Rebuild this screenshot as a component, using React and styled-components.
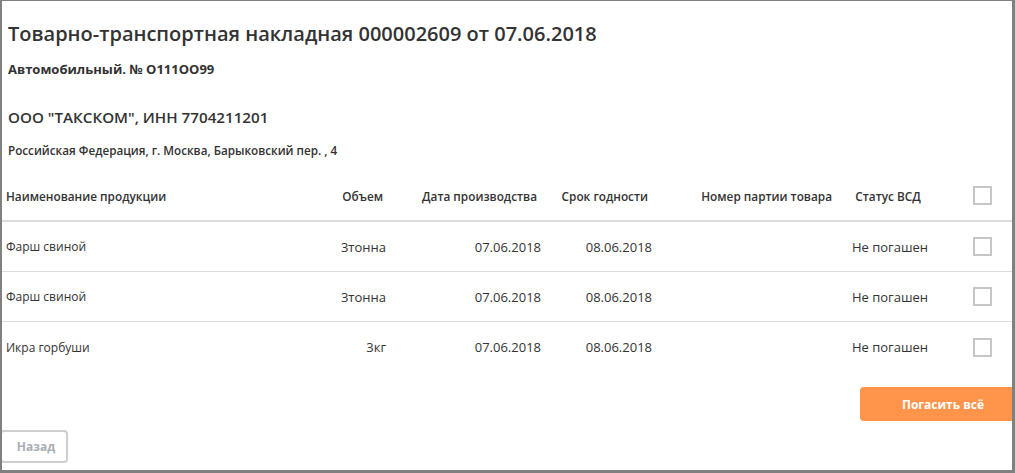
import React from "react";
import styled, { createGlobalStyle } from "styled-components";

const Global = createGlobalStyle`
  html, body { margin: 0; padding: 0; background: #fff; }
  body { font-family: "Open Sans", "Noto Sans", sans-serif; color: #333; }
  * { box-sizing: border-box; }
`;

const Frame = styled.div`
  width: 1015px;
  height: 473px;
  border-top: 1px solid #808080;
  border-left: 2px solid #808080;
  border-right: 3px solid #808080;
  border-bottom: 3px solid #808080;
  overflow: hidden;
  display: flex;
  flex-direction: column;
`;

const Header = styled.div`
  padding: 19px 0 0 6px;
  display: flex;
  flex-direction: column;
`;

const Title = styled.h1`
  margin: 0;
  font-size: 20px;
  font-weight: 600;
  line-height: 28px;
  color: #333;
`;

const Transport = styled.div`
  margin-top: 12px;
  font-size: 13px;
  font-weight: 700;
  line-height: 18px;
`;

const Company = styled.div`
  margin-top: 28px;
  font-size: 15.2px;
  font-weight: 600;
  line-height: 22px;
`;

const Address = styled.div`
  margin-top: 14px;
  font-size: 11.7px;
  font-weight: 600;
  line-height: 16px;
`;

const COLS = "298px 90px 155px 111px 184px 100px 1fr";

const Table = styled.div`
  margin-top: 13px;
  display: flex;
  flex-direction: column;
`;

const Row = styled.div`
  display: grid;
  grid-template-columns: ${COLS};
  align-items: center;
  height: ${(p) => (p.$head ? "51px" : "50px")};
  border-bottom: ${(p) =>
    p.$head ? "2px solid #dcdcdc" : p.$last ? "none" : "1px solid #dcdcdc"};
  font-size: ${(p) => (p.$head ? "11.8px" : "13px")};
  font-weight: ${(p) => (p.$head ? 600 : 400)};
  color: #333;
`;

const Cell = styled.div`
  text-align: ${(p) => p.$align || "left"};
  padding-left: ${(p) => p.$pl || 0}px;
  padding-right: ${(p) => p.$pr || 0}px;
  white-space: nowrap;
`;

const NameCell = styled(Cell)`
  font-size: 12px;
`;

const CheckCell = styled.div`
  padding-left: 33px;
  display: flex;
  align-items: center;
`;

const Check = styled.span`
  display: block;
  width: 19px;
  height: 19px;
  border: 2px solid #c6c6c6;
  background: #fff;
`;

const Footer = styled.div`
  display: flex;
  flex-direction: column;
  align-items: stretch;
  margin-top: 15px;
`;

const Actions = styled.div`
  display: flex;
  justify-content: flex-end;
  margin-right: -14px;
`;

const PrimaryButton = styled.button`
  width: 166px;
  height: 34px;
  border: none;
  border-radius: 4px;
  background: #ff944a;
  color: #fff;
  font-family: "Open Sans", sans-serif;
  font-size: 12px;
  font-weight: 700;
  cursor: pointer;
`;

const BackButton = styled.button`
  margin-top: 9px;
  margin-left: -2px;
  align-self: flex-start;
  width: 68px;
  height: 33px;
  border: 2px solid #cfcfcf;
  border-radius: 4px;
  background: #fff;
  color: #a9adb5;
  font-family: "Open Sans", sans-serif;
  font-size: 12px;
  font-weight: 700;
  padding: 0 0 0 4px;
`;

const rows = [
  ["Фарш свиной", "3тонна", "07.06.2018", "08.06.2018", "", "Не погашен"],
  ["Фарш свиной", "3тонна", "07.06.2018", "08.06.2018", "", "Не погашен"],
  ["Икра горбуши", "3кг", "07.06.2018", "08.06.2018", "", "Не погашен"],
];

export default function App() {
  return (
    <>
      <Global />
      <Frame>
        <Header>
          <Title>Товарно-транспортная накладная 000002609 от 07.06.2018</Title>
          <Transport>Автомобильный. № О111ОО99</Transport>
          <Company>ООО "ТАКСКОМ", ИНН 7704211201</Company>
          <Address>Российская Федерация, г. Москва, Барыковский пер. , 4</Address>
        </Header>
        <Table>
          <Row $head>
            <Cell $pl={4}>Наименование продукции</Cell>
            <Cell $align="right" $pr={7}>Объем</Cell>
            <Cell $align="right" $pr={8}>Дата производства</Cell>
            <Cell $align="right" $pr={8}>Срок годности</Cell>
            <Cell $align="right" $pr={8}>Номер партии товара</Cell>
            <Cell $align="center" $pr={4}>Статус ВСД</Cell>
            <CheckCell><Check /></CheckCell>
          </Row>
          {rows.map((r, i) => (
            <Row key={i} $last={i === rows.length - 1}>
              <NameCell $pl={4}>{r[0]}</NameCell>
              <Cell $align="right" $pr={4}>{r[1]}</Cell>
              <Cell $align="right" $pr={4}>{r[2]}</Cell>
              <Cell $align="right" $pr={4}>{r[3]}</Cell>
              <Cell $align="right" $pr={8}>{r[4]}</Cell>
              <Cell $align="center">{r[5]}</Cell>
              <CheckCell><Check /></CheckCell>
            </Row>
          ))}
        </Table>
        <Footer>
          <Actions>
            <PrimaryButton>Погасить всё</PrimaryButton>
          </Actions>
          <BackButton>Назад</BackButton>
        </Footer>
      </Frame>
    </>
  );
}
